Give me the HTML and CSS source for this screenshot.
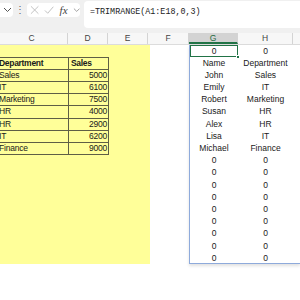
FILE: index.html
```html
<!DOCTYPE html>
<html>
<head>
<meta charset="utf-8">
<link rel="stylesheet" href="styles.css">
</head>
<body>
<div class="topbar">
  <div class="namebox"><svg width="9" height="6" viewBox="0 0 9 6"><path d="M1 1l3.5 3.5L8 1" fill="none" stroke="#555" stroke-width="1"/></svg></div>
  <div class="dots">⋮</div>
  <div class="fxbox">
    <svg class="ic" width="10" height="10" viewBox="0 0 10 10"><path d="M1 1l8 8M9 1l-8 8" stroke="#bdbdbd" stroke-width="1" fill="none"/></svg>
    <svg class="ic" width="11" height="10" viewBox="0 0 11 10"><path d="M1 5.5l3 3L10 1.5" stroke="#bdbdbd" stroke-width="1" fill="none"/></svg>
    <span class="fx">fx</span>
    <svg class="ic" width="8" height="6" viewBox="0 0 8 6"><path d="M1 1.5l3 3 3-3" stroke="#9a9a9a" stroke-width="1" fill="none"/></svg>
  </div>
  <div class="formula">=TRIMRANGE(A1:E18,0,3)</div>
</div>
<div class="headers">
  <div class="h w-c">C</div>
  <div class="h w-d">D</div>
  <div class="h w-e">E</div>
  <div class="h w-f">F</div>
  <div class="h w-g sel">G</div>
  <div class="h w-h">H</div>
  <div class="h rest"></div>
</div>
<div class="sheet">
  <div class="yellow">
    <div class="tbl">
      <div class="c b">Department</div><div class="c b">Sales</div>
      <div class="c">Sales</div><div class="c n">5000</div>
      <div class="c">IT</div><div class="c n">6100</div>
      <div class="c">Marketing</div><div class="c n">7500</div>
      <div class="c">HR</div><div class="c n">4000</div>
      <div class="c">HR</div><div class="c n">2900</div>
      <div class="c">IT</div><div class="c n">6200</div>
      <div class="c">Finance</div><div class="c n">9000</div>
    </div>
  </div>
  <div class="fcol"></div>
  <div class="spill">
    <div class="grid">
      <div class="s active">0<span class="handle"></span></div><div class="s">0</div>
      <div class="s">Name</div><div class="s">Department</div>
      <div class="s">John</div><div class="s">Sales</div>
      <div class="s">Emily</div><div class="s">IT</div>
      <div class="s">Robert</div><div class="s">Marketing</div>
      <div class="s">Susan</div><div class="s">HR</div>
      <div class="s">Alex</div><div class="s">HR</div>
      <div class="s">Lisa</div><div class="s">IT</div>
      <div class="s">Michael</div><div class="s">Finance</div>
      <div class="s">0</div><div class="s">0</div>
      <div class="s">0</div><div class="s">0</div>
      <div class="s">0</div><div class="s">0</div>
      <div class="s">0</div><div class="s">0</div>
      <div class="s">0</div><div class="s">0</div>
      <div class="s">0</div><div class="s">0</div>
      <div class="s">0</div><div class="s">0</div>
      <div class="s">0</div><div class="s">0</div>
      <div class="s">0</div><div class="s">0</div>
    </div>
  </div>
</div>
</body>
</html>
```

FILE: styles.css
```css
* { box-sizing: border-box; }
html, body { margin: 0; padding: 0; }
body {
  width: 300px;
  height: 300px;
  overflow: hidden;
  background: #ffffff;
  font-family: "Liberation Sans", Arial, sans-serif;
}
.topbar {
  height: 33px;
  background: #f0f0f0;
  display: flex;
  align-items: flex-start;
  padding-top: 3px;
}
.namebox {
  width: 13px;
  height: 14px;
  background: #ffffff;
  border-radius: 0 4px 4px 0;
  display: flex;
  align-items: center;
  justify-content: center;
  padding-left: 1px;
}
.dots {
  width: 14px;
  text-align: center;
  font-size: 10px;
  line-height: 14px;
  color: #666;
}
.fxbox {
  width: 53px;
  height: 14px;
  background: #ffffff;
  border-radius: 4px;
  display: flex;
  align-items: center;
  padding-left: 3px;
  gap: 5px;
}
.fx {
  font-family: "Liberation Serif", serif;
  font-style: italic;
  font-size: 11px;
  color: #444;
  line-height: 14px;
}
.formula {
  margin-left: 4px;
  margin-top: -2px;
  flex: 1;
  height: 27px;
  background: #ffffff;
  border-radius: 4px 0 0 4px;
  font-family: "Liberation Mono", monospace;
  font-size: 8.4px;
  color: #222;
  padding: 6px 0 0 6px;
}
.headers {
  display: flex;
  height: 12px;
  margin-left: -4px;
  background: #f7f7f7;
  border-bottom: 1px solid #dcdcdc;
}
.h {
  border-right: 1px solid #d4d4d4;
  font-size: 8.5px;
  line-height: 11px;
  color: #444;
  text-align: center;
}
.w-c { width: 72px; }
.w-d { width: 40px; }
.w-e { width: 40px; }
.w-f { width: 41px; }
.w-g { width: 49px; }
.w-h { width: 55px; }
.rest { flex: 1; border-right: none; }
.h.sel {
  background: #d3d3d3;
  color: #1f6b43;
  border-bottom: 2px solid #217346;
}
.sheet {
  display: flex;
  margin-left: -4px;
  margin-top: -0.5px;
}
.yellow {
  width: 153.5px;
  height: 219.6px;
  background: #ffff99;
  padding-top: 12.2px;
}
.tbl {
  display: grid;
  grid-template-columns: 72px 40px;
  grid-auto-rows: 12.2px;
  border-top: 1px solid #5f5f45;
  border-left: 1px solid #5f5f45;
  width: 113px;
}
.c {
  border-right: 1px solid #5f5f45;
  border-bottom: 1px solid #5f5f45;
  font-size: 8.5px;
  line-height: 11.5px;
  color: #1a1a1a;
  padding-left: 2px;
  letter-spacing: -0.2px;
  white-space: nowrap;
}
.c.b { font-weight: bold; letter-spacing: -0.3px; }
.c.n { text-align: right; padding-right: 1px; }
.fcol { width: 39.5px; }
.spill {
  flex: 1;
  height: 219.6px;
  border-left: 1px solid #8eaadb;
  border-bottom: 1px solid #8eaadb;
  box-shadow: 0 2px 3px rgba(0,0,0,0.12);
}
.grid {
  display: grid;
  grid-template-columns: 48px 55px;
  grid-auto-rows: 12.2px;
}
.s {
  font-size: 8.5px;
  line-height: 12.5px;
  color: #1a1a1a;
  text-align: center;
  white-space: nowrap;
  position: relative;
}
.s.active {
  border: 1.5px solid #217346;
  line-height: 10px;
}
.handle {
  position: absolute;
  right: -3px;
  bottom: -3px;
  width: 4px;
  height: 4px;
  background: #217346;
  border: 1px solid #ffffff;
}
```
